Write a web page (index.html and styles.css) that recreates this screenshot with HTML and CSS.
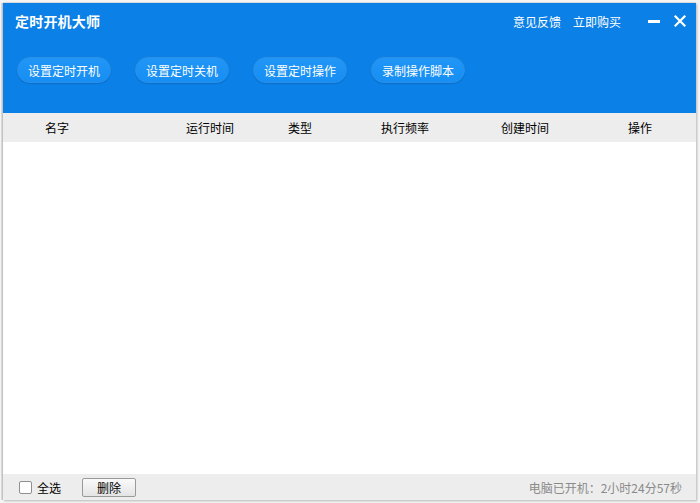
FILE: index.html
```html
<!DOCTYPE html>
<html lang="zh">
<head>
<meta charset="utf-8">
<title>定时开机大师</title>
<link rel="stylesheet" href="styles.css">
</head>
<body>
<div class="window">
  <header class="top">
    <div class="titlebar">
      <div class="title">定时开机大师</div>
      <nav class="links">
        <a>意见反馈</a>
        <a>立即购买</a>
      </nav>
      <div class="winbtns">
        <span class="min"></span>
        <svg class="close" width="12" height="12" viewBox="0 0 12 12"><path d="M1.5 1.5L10.5 10.5M10.5 1.5L1.5 10.5" stroke="#fff" stroke-width="2.2" stroke-linecap="square"/></svg>
      </div>
    </div>
    <div class="actions">
      <button class="pill">设置定时开机</button>
      <button class="pill">设置定时关机</button>
      <button class="pill">设置定时操作</button>
      <button class="pill">录制操作脚本</button>
    </div>
  </header>
  <div class="thead">
    <span>名字</span>
    <span>运行时间</span>
    <span>类型</span>
    <span>执行频率</span>
    <span>创建时间</span>
    <span>操作</span>
  </div>
  <div class="tbody"></div>
  <footer class="foot">
    <label class="chk"><span class="box"></span>全选</label>
    <button class="del">删除</button>
    <div class="uptime">电脑已开机：2小时24分57秒</div>
  </footer>
</div>
</body>
</html>
```
FILE: styles.css
```css
* { box-sizing: border-box; }
html, body { margin: 0; padding: 0; }
body {
  width: 700px;
  height: 503px;
  background: #f4f4f4;
  font-family: "Noto Sans CJK SC", "Noto Sans", sans-serif;
  font-size: 12px;
  padding: 3px 4px 3px 3px;
  overflow: hidden;
}
.window {
  width: 693px;
  height: 497px;
  background: #fff;
  box-shadow: -1px 0 0 #c4c4c4, -2px 0 0 #d8d8d8, 0 -1px 0 #d8d8d8, 1px 1px 2px rgba(0,0,0,0.25);
  display: flex;
  flex-direction: column;
}
.top {
  background: #0b80e6;
  height: 110px;
  color: #fff;
}
.titlebar {
  display: flex;
  align-items: center;
  height: 36px;
  padding: 0 10px 0 12px;
}
.title {
  font-size: 14px;
  font-weight: bold;
  flex: 1;
  letter-spacing: 0.2px;
}
.links { display: flex; gap: 12px; margin-right: 27px; }
.links a { color: #fff; font-size: 12px; }
.winbtns { display: flex; align-items: center; gap: 14px; }
.min { display: block; width: 12px; height: 3px; background: #fff; }
.close { display: block; }
.actions {
  display: flex;
  gap: 24px;
  padding: 18px 0 0 14px;
}
.pill {
  width: 94px;
  height: 26px;
  border-radius: 13px;
  border: 1px solid #2c8fe4;
  background: linear-gradient(#2196f7, #168ef3);
  box-shadow: 0 1px 1px rgba(0,60,140,0.25);
  color: #fff;
  font-family: inherit;
  font-size: 12px;
  padding: 0;
}
.thead {
  display: grid;
  grid-template-columns: 42px 141px 102px 93px 120px 127px 1fr;
  height: 29px;
  align-items: center;
  background: #ededed;
  color: #000;
}
.thead span:first-child { grid-column: 2; }
.tbody { flex: 1; background: #fff; }
.foot {
  height: 26px;
  background: #ededed;
  display: flex;
  align-items: center;
  padding: 0 14px 0 16px;
  color: #000;
}
.chk { display: flex; align-items: center; gap: 5px; }
.box {
  width: 13px;
  height: 13px;
  border: 1px solid #8f8f8f;
  border-radius: 2px;
  background: #fff;
}
.del {
  margin-left: 21px;
  width: 54px;
  height: 19px;
  border: 1px solid #9a9a9a;
  border-radius: 2px;
  background: linear-gradient(#fafafa, #e4e4e4);
  font-family: inherit;
  font-size: 12px;
  padding: 0;
  color: #000;
  line-height: 17px;
}
.uptime { margin-left: auto; color: #8a8a8a; }
```
